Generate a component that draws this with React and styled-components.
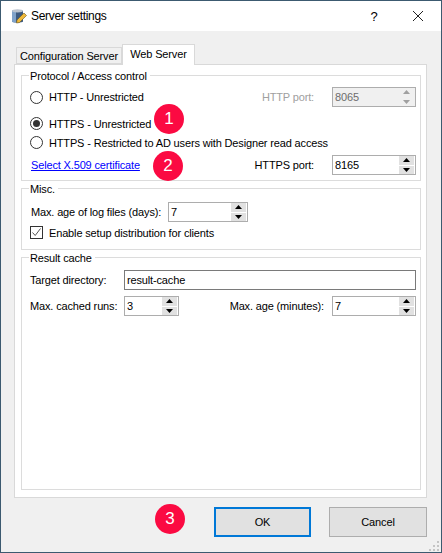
import React from "react";
import styled, { createGlobalStyle } from "styled-components";

const Global = createGlobalStyle`
  html, body { margin: 0; padding: 0; background: #f0f0f0; }
  * { box-sizing: border-box; }
  body { font-family: "Liberation Sans", Arial, sans-serif; font-size: 11px; letter-spacing: -0.15px; color: #000; }
`;

const Win = styled.div`
  position: relative;
  width: 442px;
  height: 553px;
  border: 1px solid #3c5a70;
  background: #f0f0f0;
  display: flex;
  flex-direction: column;
  overflow: hidden;
`;

const TitleBar = styled.div`
  height: 30px;
  background: #fff;
  display: flex;
  align-items: center;
  padding-left: 10px;
  flex-shrink: 0;
`;

const Title = styled.span`
  margin-left: 4px;
  font-size: 12px;
  letter-spacing: -0.3px;
  flex: 1;
`;

const Help = styled.span`
  width: 46px;
  padding-left: 4px;
  text-align: center;
  font-size: 13px;
`;

const Close = styled.div`
  width: 46px;
  display: flex;
  justify-content: center;
`;

const Body = styled.div`
  flex: 1;
  display: flex;
  flex-direction: column;
  padding: 13px 14px 0 13px;
`;

const Tabs = styled.div`
  display: flex;
  align-items: flex-end;
  height: 20px;
  padding-left: 2px;
`;

const Tab = styled.div`
  width: ${(p) => p.$w}px;
  height: ${(p) => (p.$active ? "21px" : "17px")};
  margin-bottom: ${(p) => (p.$active ? "-1px" : "0")};
  background: ${(p) => (p.$active ? "#fff" : "#f0f0f0")};
  border: 1px solid #d9d9d9;
  border-bottom: ${(p) => (p.$active ? "none" : "1px solid #d9d9d9")};
  line-height: ${(p) => (p.$active ? "18px" : "16px")};
  text-align: center;
  position: relative;
  z-index: ${(p) => (p.$active ? 1 : 0)};
  white-space: nowrap;
`;

const Pane = styled.div`
  height: 434px;
  background: #fff;
  border: 1px solid #d9d9d9;
  padding: 10px 5px 7px 6px;
  display: flex;
  flex-direction: column;
  gap: 7px;
`;

const Group = styled.div`
  border: 1px solid #dcdcdc;
  padding: 0 4px 0 8px;
  display: flex;
  flex-direction: column;
  flex: ${(p) => (p.$grow ? 1 : "none")};
`;

const Legend = styled.div`
  margin: -8px 0 0 -1px;
  padding: 0 3px 0 1px;
  background: #fff;
  width: fit-content;
  height: 16px;
  line-height: 16px;
`;

const Row = styled.div`
  display: flex;
  align-items: center;
  height: ${(p) => p.$h || 20}px;
  margin-top: ${(p) => p.$mt || 0}px;
`;

const Label = styled.span`
  white-space: nowrap;
  color: ${(p) => (p.$disabled ? "#a0a0a0" : "#000")};
  width: ${(p) => (p.$w ? p.$w + "px" : "auto")};
  margin-right: ${(p) => p.$mr || 0}px;
  margin-left: ${(p) => p.$ml || 0}px;
`;

const Spacer = styled.div`
  flex: 1;
`;

const Radio = styled.span`
  width: 13px;
  height: 13px;
  border-radius: 50%;
  border: 1px solid #333;
  background: #fff;
  display: inline-flex;
  align-items: center;
  justify-content: center;
  margin-right: 6px;
  flex-shrink: 0;
  &::after {
    content: "";
    width: 7px;
    height: 7px;
    border-radius: 50%;
    background: ${(p) => (p.$on ? "#333" : "transparent")};
  }
`;

const Check = styled.span`
  width: 13px;
  height: 13px;
  border: 1px solid #333;
  background: #fff;
  display: inline-flex;
  margin-right: 6px;
  flex-shrink: 0;
`;

const CertLink = styled.a`
  color: #0000ff;
  text-decoration: underline;
  white-space: nowrap;
  margin-left: 1px;
`;

const SpinBox = styled.div`
  width: ${(p) => p.$w}px;
  height: 20px;
  border: 1px solid #adadad;
  background: ${(p) => (p.$disabled ? "#f0f0f0" : "#fff")};
  color: ${(p) => (p.$disabled ? "#6d6d6d" : "#000")};
  display: flex;
  align-items: center;
  justify-content: space-between;
  padding: 0 1px 0 2px;
`;

const SpinButtons = styled.div`
  display: flex;
  flex-direction: column;
  gap: 1px;
  width: 15px;
  height: 18px;
`;

const SpinButton = styled.div`
  flex: 1;
  background: ${(p) => (p.$disabled ? "#f0f0f0" : "#e1e1e1")};
  display: flex;
  align-items: center;
  justify-content: center;
  color: ${(p) => (p.$disabled ? "#a0a0a0" : "#000")};
`;

const TextInput = styled.div`
  flex: 1;
  height: 20px;
  border: 1px solid #7a7a7a;
  line-height: 18px;
  padding-left: 2px;
`;

const Footer = styled.div`
  display: flex;
  justify-content: flex-end;
  gap: 18px;
  margin-top: 9px;
`;

const Button = styled.div`
  width: ${(p) => p.$w}px;
  height: 30px;
  background: #e1e1e1;
  border: ${(p) => (p.$primary ? "2px solid #0078d7" : "1px solid #adadad")};
  display: flex;
  align-items: center;
  justify-content: center;
`;

const Badge = styled.div`
  position: absolute;
  left: ${(p) => p.$x - 15}px;
  top: ${(p) => p.$y - 15}px;
  width: 30px;
  height: 30px;
  border-radius: 50%;
  background: #fb0a42;
  color: #fff;
  font-size: 17px;
  display: flex;
  align-items: center;
  justify-content: center;
`;

const Grip = styled.svg`
  position: absolute;
  right: 1px;
  bottom: 1px;
`;

const Arrow = ({ up }) => (
  <svg width="7" height="4" viewBox="0 0 7 4">
    <path d={up ? "M3.5 0L7 4H0Z" : "M0 0H7L3.5 4Z"} fill="currentColor" />
  </svg>
);

const Spin = ({ w, value, disabled }) => (
  <SpinBox $w={w} $disabled={disabled}>
    <span>{value}</span>
    <SpinButtons>
      <SpinButton $disabled={disabled}><Arrow up /></SpinButton>
      <SpinButton $disabled={disabled}><Arrow /></SpinButton>
    </SpinButtons>
  </SpinBox>
);

const AppIcon = () => (
  <svg width="16" height="16" viewBox="0 0 16 16">
    <path d="M1 3C1 1.5 12 1.5 12 3V13.5C12 15 1 15 1 13.5Z" fill="#3d5a80" />
    <path d="M1 3C1 1.5 5 1.5 5 3V14.5C3 14.5 1 14.2 1 13.5Z" fill="#7fa2ca" />
    <ellipse cx="6.5" cy="2.8" rx="5.5" ry="1.6" fill="#b9c2ce" />
    <path d="M6 12L13 5L15.5 7.5L8.5 14.5L5.5 15Z" fill="#f0b93a" stroke="#6b5a20" strokeWidth="0.6" />
  </svg>
);

export default function App() {
  return (
    <>
      <Global />
      <Win>
        <TitleBar>
          <AppIcon />
          <Title>Server settings</Title>
          <Help>?</Help>
          <Close>
            <svg width="10" height="10" viewBox="0 0 10 10">
              <path d="M0 0L10 10M10 0L0 10" stroke="#222" strokeWidth="1" />
            </svg>
          </Close>
        </TitleBar>
        <Body>
          <Tabs>
            <Tab $w={106}>Configuration Server</Tab>
            <Tab $w={73} $active>Web Server</Tab>
          </Tabs>
          <Pane>
            <Group>
              <Legend>Protocol / Access control</Legend>
              <Row $mt={3}>
                <Radio />
                <Label>HTTP - Unrestricted</Label>
                <Spacer />
                <Label $disabled $mr={18}>HTTP port:</Label>
                <Spin w={84} value="8065" disabled />
              </Row>
              <Row $h={19} $mt={7}>
                <Radio $on />
                <Label>HTTPS - Unrestricted</Label>
              </Row>
              <Row $h={19}>
                <Radio />
                <Label>HTTPS - Restricted to AD users with Designer read access</Label>
              </Row>
              <Row $mt={3}>
                <CertLink href="#">Select X.509 certificate</CertLink>
                <Spacer />
                <Label $mr={18}>HTTPS port:</Label>
                <Spin w={84} value="8165" />
              </Row>
              <Row $h={5} />
            </Group>
            <Group>
              <Legend>Misc.</Legend>
              <Row $mt={5}>
                <Label $ml={1} $w={137}>Max. age of log files (days):</Label>
                <Spin w={80} value="7" />
              </Row>
              <Row $mt={1} $h={19}>
                <Check>
                  <svg width="11" height="11" viewBox="0 0 11 11">
                    <path d="M1.5 5.5L4.2 8.5L9.5 1.5" fill="none" stroke="#555" strokeWidth="1" />
                  </svg>
                </Check>
                <Label>Enable setup distribution for clients</Label>
              </Row>
              <Row $h={7} />
            </Group>
            <Group $grow>
              <Legend>Result cache</Legend>
              <Row $mt={4}>
                <Label $w={94}>Target directory:</Label>
                <TextInput>result-cache</TextInput>
              </Row>
              <Row $mt={6}>
                <Label $w={94}>Max. cached runs:</Label>
                <Spin w={55} value="3" />
                <Spacer />
                <Label $mr={8}>Max. age (minutes):</Label>
                <Spin w={84} value="7" />
              </Row>
            </Group>
          </Pane>
          <Footer>
            <Button $w={97} $primary>OK</Button>
            <Button $w={98}>Cancel</Button>
          </Footer>
        </Body>
        <Badge $x={168} $y={118}>1</Badge>
        <Badge $x={167} $y={165}>2</Badge>
        <Badge $x={169} $y={518}>3</Badge>
        <Grip width="11" height="11" viewBox="0 0 11 11">
          <path d="M8 1h2v2H8zM4 5h2v2H4zM8 5h2v2H8zM0 9h2v2H0zM4 9h2v2H4zM8 9h2v2H8z" fill="#c4c4c4" />
        </Grip>
      </Win>
    </>
  );
}
